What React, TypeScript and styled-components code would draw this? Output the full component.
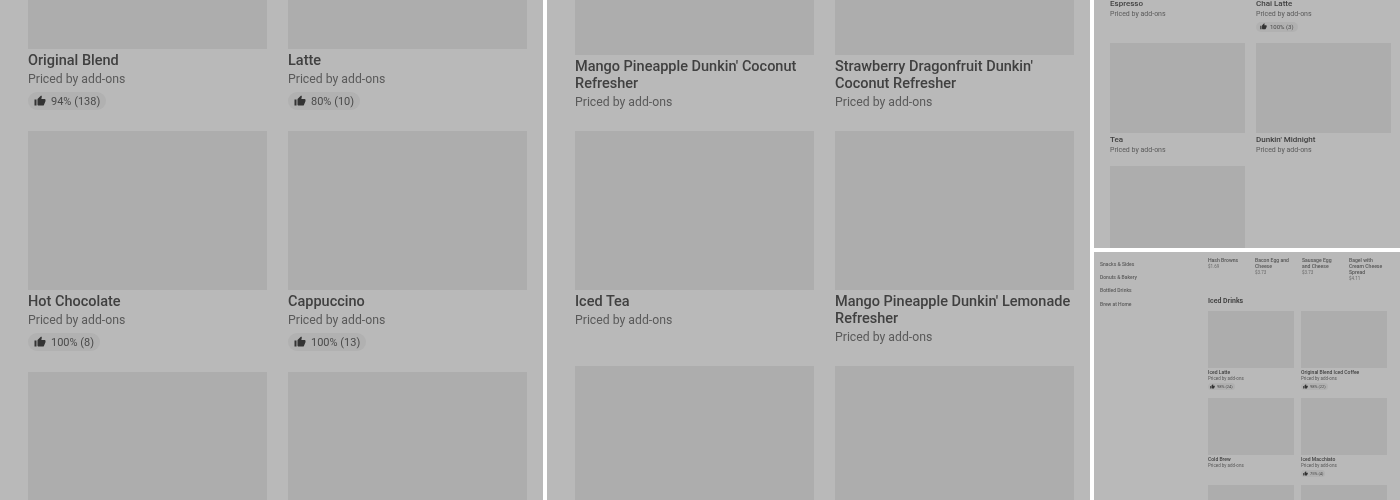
import React from "react";
import styled, { createGlobalStyle } from "styled-components";
import { MdThumbUp } from "react-icons/md";

const Global = createGlobalStyle`
  html, body { margin: 0; padding: 0; background: #fff; }
  body { font-family: "Roboto", "Liberation Sans", sans-serif; }
`;

const Collage = styled.div`
  width: 1400px;
  height: 500px;
  display: grid;
  grid-template-columns: 543px 543px 306px;
  grid-template-rows: 248px 248px;
  gap: 4px;
  background: #fff;
  overflow: hidden;
`;

const Panel = styled.section<{ $tall?: boolean; $soft?: number }>`
  background: #b9b9b9;
  overflow: hidden;
  min-width: 0;
  grid-row: ${(p) => (p.$tall ? "1 / span 2" : "auto")};
  filter: ${(p) => (p.$soft ? `blur(${p.$soft}px)` : "none")};
`;

type Metrics = {
  title: number; titleLh: number; sub: number; subLh: number; titleGap: number; subGap: number;
  badge: number; badgeH: number; badgeGap: number; badgePad: number; icon: number; iconGap: number; end: number;
};

const large: Metrics = { title: 14.5, titleLh: 17, sub: 12.25, subLh: 17, titleGap: 3, subGap: 2, badge: 11, badgeH: 18, badgeGap: 4, badgePad: 6, icon: 12, iconGap: 5, end: 1 };
const medium: Metrics = { title: 8, titleLh: 9.5, sub: 7, subLh: 9.5, titleGap: 2, subGap: 1.5, badge: 6, badgeH: 10, badgeGap: 2, badgePad: 4, icon: 7, iconGap: 3, end: 0 };
const small: Metrics = { title: 5, titleLh: 6, sub: 4.5, subLh: 6, titleGap: 1, subGap: 1, badge: 4, badgeH: 7, badgeGap: 1, badgePad: 2, icon: 5, iconGap: 2, end: 0 };

const Grid = styled.div<{ $cols: string; $gapX: number; $gapY: number; $top: number; $left: number }>`
  display: grid;
  grid-template-columns: ${(p) => p.$cols};
  column-gap: ${(p) => p.$gapX}px;
  row-gap: ${(p) => p.$gapY}px;
  margin-top: ${(p) => p.$top}px;
  margin-left: ${(p) => p.$left}px;
`;

const Card = styled.article`
  display: flex;
  flex-direction: column;
  align-items: flex-start;
  min-width: 0;
`;

const Photo = styled.div<{ $h: number }>`
  width: 100%;
  height: ${(p) => p.$h}px;
  background: #adadad;
`;

const Title = styled.h3<{ $m: Metrics }>`
  margin: ${(p) => p.$m.titleGap}px 0 0;
  font-size: ${(p) => p.$m.title}px;
  line-height: ${(p) => p.$m.titleLh}px;
  font-weight: 500;
  color: #404040;
`;

const Sub = styled.p<{ $m: Metrics }>`
  margin: ${(p) => p.$m.subGap}px 0 0;
  font-size: ${(p) => p.$m.sub}px;
  line-height: ${(p) => p.$m.subLh}px;
  font-weight: 400;
  color: #5a5a5a;
`;

const Badge = styled.div<{ $m: Metrics }>`
  display: inline-flex;
  align-items: center;
  gap: ${(p) => p.$m.iconGap}px;
  height: ${(p) => p.$m.badgeH}px;
  margin: ${(p) => p.$m.badgeGap}px 0 ${(p) => p.$m.end}px;
  padding: 0 ${(p) => p.$m.badgePad}px;
  border-radius: ${(p) => p.$m.badgeH / 2}px;
  background: #b1b1b1;
  font-size: ${(p) => p.$m.badge}px;
  color: #4a4a4a;
  svg { width: ${(p) => p.$m.icon}px; height: ${(p) => p.$m.icon}px; color: #333; flex: none; }
`;

type Item = { name: string; rating?: string };

const Product = ({ item, h, m }: { item: Item; h: number; m: Metrics }) => (
  <Card>
    <Photo $h={h} />
    <Title $m={m}>{item.name}</Title>
    <Sub $m={m}>Priced by add-ons</Sub>
    {item.rating && (
      <Badge $m={m}>
        <MdThumbUp />
        {item.rating}
      </Badge>
    )}
  </Card>
);

const Split = styled.div`
  display: grid;
  grid-template-columns: 114px 1fr;
  height: 100%;
`;

const Side = styled.nav`
  display: flex;
  flex-direction: column;
  gap: 7.2px;
  padding: 9px 0 0 6px;
  font-size: 5px;
  line-height: 6px;
  font-weight: 500;
  color: #5a5a5a;
`;

const Main = styled.div`
  display: flex;
  flex-direction: column;
  min-width: 0;
`;

const Sides = styled.div`
  display: grid;
  grid-template-columns: repeat(4, 38px);
  column-gap: 9px;
  margin-top: 5px;
  height: 40px;
`;

const Snack = styled.div`
  font-size: 5.1px;
  line-height: 6px;
  color: #555;
  font-weight: 500;
`;

const Price = styled.div`
  margin-top: 0.5px;
  font-size: 4.5px;
  line-height: 6px;
  color: #6a6a6a;
  font-weight: 400;
`;

const Section = styled.h2`
  margin: 0 0 5px;
  font-size: 7px;
  line-height: 9px;
  font-weight: 600;
  color: #3c3c3c;
`;

const panelOne: Item[] = [
  { name: "Original Blend", rating: "94% (138)" },
  { name: "Latte", rating: "80% (10)" },
  { name: "Hot Chocolate", rating: "100% (8)" },
  { name: "Cappuccino", rating: "100% (13)" },
  { name: "Mocha" },
  { name: "Americano" },
];

const panelTwo: Item[] = [
  { name: "Mango Pineapple Dunkin' Coconut Refresher" },
  { name: "Strawberry Dragonfruit Dunkin' Coconut Refresher" },
  { name: "Iced Tea" },
  { name: "Mango Pineapple Dunkin' Lemonade Refresher" },
  { name: "Blueberry" },
  { name: "Peach" },
];

const panelThree: Item[] = [
  { name: "Espresso" },
  { name: "Chai Latte", rating: "100% (3)" },
  { name: "Tea" },
  { name: "Dunkin' Midnight" },
  { name: "Macchiato" },
];

const panelFour: Item[] = [
  { name: "Iced Latte", rating: "98% (24)" },
  { name: "Original Blend Iced Coffee", rating: "98% (22)" },
  { name: "Cold Brew" },
  { name: "Iced Macchiato", rating: "75% (4)" },
  { name: "Iced Mocha" },
  { name: "Iced Tea" },
];

const snacks = [
  { name: "Hash Browns", price: "$1.69" },
  { name: "Bacon Egg and Cheese", price: "$3.73" },
  { name: "Sausage Egg and Cheese", price: "$3.73" },
  { name: "Bagel with Cream Cheese Spread", price: "$4.11" },
];

export default function App() {
  return (
    <>
      <Global />
      <Collage>
        <Panel $tall $soft={0.25}>
          <Grid $cols="239px 238.5px" $gapX={21} $gapY={20} $top={-110} $left={28}>
            {panelOne.map((i) => <Product key={i.name} item={i} h={159} m={large} />)}
          </Grid>
        </Panel>
        <Panel $tall $soft={0.25}>
          <Grid $cols="239px 238.5px" $gapX={21} $gapY={20} $top={-104} $left={28}>
            {panelTwo.map((i) => <Product key={i.name} item={i} h={159} m={large} />)}
          </Grid>
        </Panel>
        <Panel $soft={0.35}>
          <Grid $cols="135px 135px" $gapX={11} $gapY={11} $top={-93} $left={16}>
            {panelThree.map((i) => <Product key={i.name} item={i} h={90} m={medium} />)}
          </Grid>
        </Panel>
        <Panel $soft={0.35}>
          <Split>
            <Side>
              <span>Snacks &amp; Sides</span>
              <span>Donuts &amp; Bakery</span>
              <span>Bottled Drinks</span>
              <span>Brew at Home</span>
            </Side>
            <Main>
              <Sides>
                {snacks.map((s) => (
                  <div key={s.name}>
                    <Snack>{s.name}</Snack>
                    <Price>{s.price}</Price>
                  </div>
                ))}
              </Sides>
              <Section>Iced Drinks</Section>
              <Grid $cols="86px 86px" $gapX={7} $gapY={8} $top={0} $left={0}>
                {panelFour.map((i) => <Product key={i.name} item={i} h={57} m={small} />)}
              </Grid>
            </Main>
          </Split>
        </Panel>
      </Collage>
    </>
  );
}
